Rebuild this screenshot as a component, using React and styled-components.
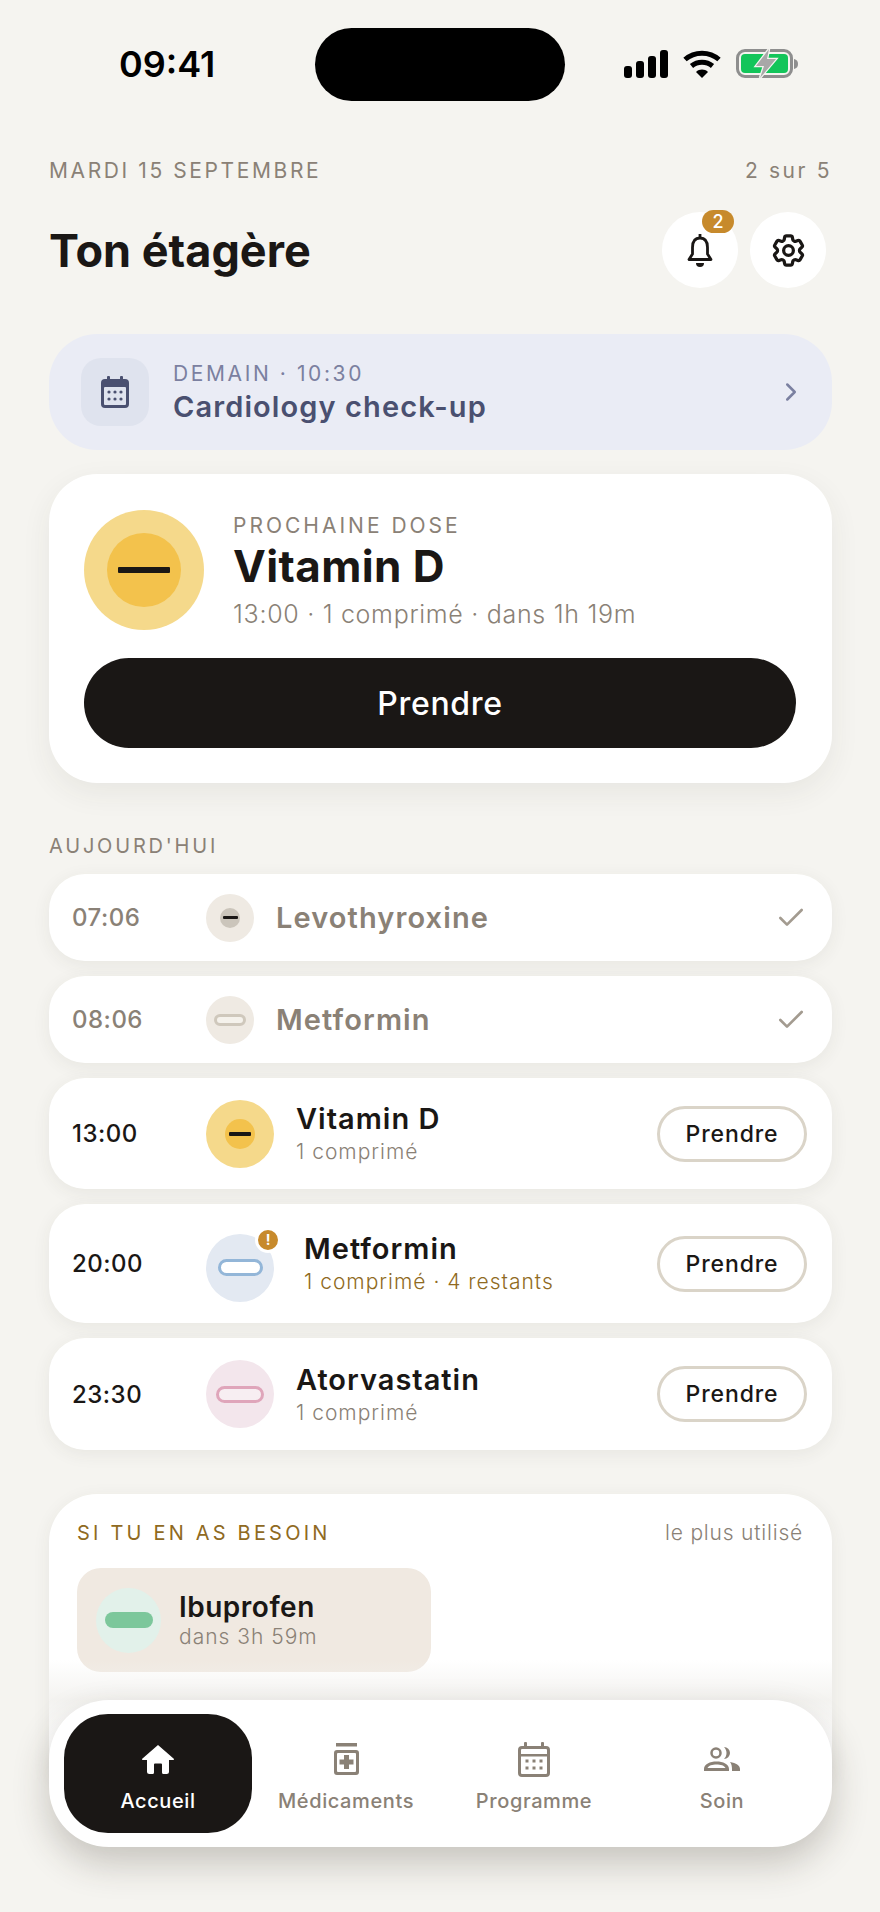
import styled, { createGlobalStyle } from "styled-components";
import { ChevronRight, Check } from "lucide-react";
import { HiOutlineCog6Tooth } from "react-icons/hi2";

const GlobalStyle = createGlobalStyle`
    html, body {
        margin: 0;
        padding: 0;
        background: #f5f4f0;
        font-family: "Inter", "Liberation Sans", sans-serif;
    }
    * { box-sizing: border-box; }
`;

const Phone = styled.div`
    position: relative;
    width: 880px;
    height: 1912px;
    overflow: hidden;
    background: #f5f4f0;
    color: #1a1715;
`;

const StatusBar = styled.div`
    display: flex;
    align-items: center;
    height: 73px;
    margin-top: 28px;
    padding-left: 119px;
`;

const Clock = styled.span`
    font-size: 36px;
    font-weight: 600;
    color: #000;
    width: 196px;
    margin-top: -1px;
`;

const Island = styled.div`
    width: 250px;
    height: 73px;
    border-radius: 37px;
    background: #000;
`;

const StatusIcons = styled.div`
    display: flex;
    align-items: center;
    gap: 15px;
    margin-left: 59px;
    margin-top: -1px;
`;

const Content = styled.main`
    padding: 56px 48px 0 49px;
`;

const DateRow = styled.div`
    display: flex;
    justify-content: space-between;
    align-items: center;
    height: 26px;
    font-size: 21px;
    letter-spacing: 2.6px;
    color: #8a8176;
`;

const TitleRow = styled.div`
    display: flex;
    justify-content: space-between;
    align-items: center;
    margin-top: 29px;
    padding-right: 6px;
`;

const Title = styled.h1`
    margin: 0;
    font-size: 45px;
    font-weight: 700;
    color: #1a1715;
`;

const HeadActions = styled.div`
    display: flex;
    gap: 12px;
`;

const RoundButton = styled.div`
    position: relative;
    width: 76px;
    height: 76px;
    border-radius: 50%;
    background: #fff;
    display: flex;
    align-items: center;
    justify-content: center;
`;

const CountBadge = styled.span`
    position: absolute;
    top: -2px;
    left: 40px;
    width: 32px;
    height: 23px;
    border-radius: 12px;
    background: #c78a2c;
    color: #fff;
    font-size: 18px;
    font-weight: 500;
    display: flex;
    align-items: center;
    justify-content: center;
`;

const Banner = styled.div`
    display: flex;
    align-items: center;
    height: 116px;
    margin-top: 46px;
    padding: 0 26px 0 32px;
    border-radius: 48px;
    background: #eaecf5;
`;

const BannerIcon = styled.div`
    width: 68px;
    height: 68px;
    border-radius: 20px;
    background: #dfe3ee;
    display: flex;
    align-items: center;
    justify-content: center;
`;

const BannerText = styled.div`
    flex: 1;
    margin-left: 24px;
    padding-top: 2px;
`;

const BannerLabel = styled.div`
    font-size: 21px;
    letter-spacing: 2.6px;
    color: #7b80a0;
    line-height: 26px;
`;

const BannerTitle = styled.div`
    margin-top: 2px;
    font-size: 29px;
    font-weight: 570;
    letter-spacing: 1.1px;
    color: #4a5070;
    line-height: 36px;
`;

const NextCard = styled.section`
    margin-top: 24px;
    height: 309px;
    padding: 36px 36px 0 35px;
    border-radius: 48px;
    background: #fff;
    box-shadow: 0 10px 30px rgba(60, 50, 40, 0.07);
`;

const NextTop = styled.div`
    display: flex;
    align-items: center;
    gap: 29px;
`;

const NextInfo = styled.div`
    display: flex;
    flex-direction: column;
`;

const NextLabel = styled.div`
    font-size: 21px;
    letter-spacing: 3px;
    color: #8a8176;
    line-height: 26px;
    margin-top: 2px;
`;

const NextName = styled.div`
    font-size: 44px;
    font-weight: 700;
    letter-spacing: 0.4px;
    line-height: 54px;
    color: #1a1715;
`;

const NextMeta = styled.div`
    font-size: 25px;
    font-weight: 300;
    letter-spacing: 0.7px;
    color: #8a8176;
    line-height: 32px;
    margin-top: 5px;
`;

const PrimaryButton = styled.div`
    margin-top: 28px;
    height: 90px;
    border-radius: 45px;
    background: #1a1715;
    color: #fff;
    font-size: 32px;
    font-weight: 550;
    letter-spacing: 0.7px;
    display: flex;
    align-items: center;
    justify-content: center;
`;

const SectionLabel = styled.div`
    margin-top: 50px;
    font-size: 20px;
    letter-spacing: 2.8px;
    color: #8a8176;
    line-height: 26px;
`;

const Rows = styled.div`
    margin-top: 15px;
    display: flex;
    flex-direction: column;
    gap: 15px;
`;

const Row = styled.div`
    display: flex;
    align-items: center;
    height: ${(p) => p.$height}px;
    padding: 0 25px 0 23px;
    border-radius: 36px;
    background: #fff;
    box-shadow: 0 4px 18px rgba(60, 50, 40, 0.07);
`;

const Time = styled.span`
    width: 134px;
    font-size: 24px;
    font-weight: 500;
    letter-spacing: 0.5px;
    color: ${(p) => (p.$done ? "#8a8176" : "#1a1715")};
`;

const PillDisc = styled.div`
    position: relative;
    flex: none;
    width: ${(p) => p.$size}px;
    height: ${(p) => p.$size}px;
    margin-top: ${(p) => p.$drop || 0}px;
    border-radius: 50%;
    background: ${(p) => p.$bg};
    display: flex;
    align-items: center;
    justify-content: center;
`;

const RoundPill = styled.div`
    width: ${(p) => p.$size}px;
    height: ${(p) => p.$size}px;
    border-radius: 50%;
    background: ${(p) => p.$bg};
    display: flex;
    align-items: center;
    justify-content: center;
`;

const Score = styled.div`
    width: ${(p) => p.$size}px;
    height: ${(p) => p.$thick}px;
    background: #1a1715;
    border-radius: 1px;
`;

const Capsule = styled.div`
    width: ${(p) => p.$width}px;
    height: ${(p) => p.$height}px;
    border-radius: ${(p) => p.$height / 2}px;
    border: 3.5px solid ${(p) => p.$border};
    background: ${(p) => p.$fill};
`;

const SolidCapsule = styled.div`
    width: 48px;
    height: 16px;
    border-radius: 8px;
    background: #7cc79b;
`;

const WarnDot = styled.span`
    position: absolute;
    top: -7px;
    right: -7px;
    width: 26px;
    height: 26px;
    border-radius: 50%;
    border: 3px solid #fff;
    background: #c78a2c;
    color: #fff;
    font-size: 14px;
    font-weight: 700;
    display: flex;
    align-items: center;
    justify-content: center;
`;

const DoneName = styled.span`
    flex: 1;
    margin-left: 22px;
    font-size: 29px;
    font-weight: 600;
    letter-spacing: 1.1px;
    color: #8a8176;
`;

const MedText = styled.div`
    flex: 1;
    margin-left: ${(p) => p.$gap}px;
    display: flex;
    flex-direction: column;
    gap: ${(p) => (p.$tight ? 0 : 3)}px;
`;

const MedName = styled.span`
    font-size: 29px;
    font-weight: 600;
    letter-spacing: 1px;
    line-height: 34px;
    color: #1a1715;
`;

const TileName = styled(MedName)`
    font-size: 28px;
    letter-spacing: 0.5px;
`;

const MedSub = styled.span`
    font-size: 21px;
    font-weight: 300;
    letter-spacing: 1px;
    line-height: 26px;
    color: ${(p) => (p.$warn ? "#8f6a22" : "#8a8176")};
`;

const TakeButton = styled.div`
    width: 150px;
    height: 56px;
    border-radius: 28px;
    border: 3px solid #dad4c8;
    background: #fff;
    font-size: 23px;
    font-weight: 550;
    letter-spacing: 0.9px;
    color: #1a1715;
    display: flex;
    align-items: center;
    justify-content: center;
`;

const NeedCard = styled.section`
    margin-top: 44px;
    height: 282px;
    padding: 25px 29px 0 28px;
    border-radius: 48px 48px 0 0;
    background: #fff;
    box-shadow: 0 4px 18px rgba(60, 50, 40, 0.07);
`;

const NeedHead = styled.div`
    display: flex;
    justify-content: space-between;
    align-items: center;
    line-height: 28px;
`;

const NeedLabel = styled.span`
    font-size: 20px;
    letter-spacing: 3.2px;
    color: #8f6a22;
`;

const NeedHint = styled.span`
    font-size: 21px;
    font-weight: 300;
    letter-spacing: 0.8px;
    color: #8a8176;
`;

const NeedTile = styled.div`
    display: flex;
    align-items: center;
    gap: 18px;
    width: 354px;
    height: 104px;
    margin-top: 21px;
    padding: 0 19px;
    border-radius: 24px;
    background: #f0e9e1;
`;

/* soft veil over the card, it tapers out again behind the nav corners */
const BottomFade = styled.div`
    position: absolute;
    left: 49px;
    width: 783px;
    top: 1660px;
    height: 80px;
    background: linear-gradient(
        to bottom,
        rgba(243, 242, 239, 0),
        rgba(243, 242, 239, 0.9) 50%,
        rgba(243, 242, 239, 0)
    );
    pointer-events: none;
`;

const Nav = styled.nav`
    position: absolute;
    left: 49px;
    top: 1700px;
    width: 783px;
    height: 147px;
    padding: 14px 15px;
    display: grid;
    grid-template-columns: repeat(4, 188px);
    border-radius: 60px;
    background: #fff;
    box-shadow: 0 16px 36px rgba(50, 40, 30, 0.24);
`;

const NavItem = styled.div`
    height: 119px;
    padding-top: 27px;
    border-radius: 44px;
    background: ${(p) => (p.$active ? "#1a1715" : "transparent")};
    color: ${(p) => (p.$active ? "#fff" : "#8a8176")};
    display: flex;
    flex-direction: column;
    align-items: center;
`;

const NavGlyph = styled.div`
    height: 36px;
    display: flex;
    align-items: center;
    justify-content: center;
`;

const NavText = styled.span`
    margin-top: 11px;
    font-size: 20px;
    font-weight: 450;
    line-height: 26px;
    letter-spacing: 0.6px;
`;

const SignalIcon = () => (
    <svg width="44" height="28" viewBox="0 0 44 28" fill="#000">
        <rect x="0" y="16" width="8" height="12" rx="3" />
        <rect x="12" y="11" width="8" height="17" rx="3" />
        <rect x="24" y="6" width="8" height="22" rx="3" />
        <rect x="36" y="0" width="8" height="28" rx="3" />
    </svg>
);

const WifiIcon = () => (
    <svg width="38" height="28" viewBox="0 0 38 28" fill="none" stroke="#000" strokeWidth="5">
        <path d="M2 9.5C11.5 1 26.5 1 36 9.5" />
        <path d="M8.5 16C14.5 11 23.5 11 29.5 16" />
        <path d="M13 22 L19 28 L25 22 C21.5 18.8 16.5 18.8 13 22Z" fill="#000" stroke="none" />
    </svg>
);

const BatteryIcon = () => (
    <svg width="62" height="30" viewBox="0 0 62 30">
        <rect x="1.5" y="1.5" width="54" height="26" rx="7.5" fill="none" stroke="#8e8e8e" strokeWidth="3" />
        <rect x="5" y="5" width="47" height="19" rx="4" fill="#13c55a" />
        <path d="M58 10c3 .5 4 2.5 4 5s-1 4.500-4 5z" fill="#8e8e8e" />
        <path
            d="M33 0 L20 17 H28 L24 29 L40 10 H31 Z"
            fill="#a8a8a8"
            stroke="#f5f4f0"
            strokeWidth="2.5"
            paintOrder="stroke"
        />
    </svg>
);

const BellIcon = () => (
    <svg width="26" height="33" viewBox="0 0 26 33" fill="none" stroke="#1a1715" strokeWidth="2.8">
        <path d="M13 0v4" />
        <path d="M13 4C7.500 4 5.500 8.500 5.500 13.500V20L2 25.500H24L20.500 20V13.500C20.500 8.500 18.500 4 13 4Z" strokeLinejoin="round" />
        <path d="M9 29h8a4 4 0 0 1-8 0z" fill="#1a1715" stroke="none" />
    </svg>
);

const CalendarSmall = () => (
    <svg width="28" height="32" viewBox="0 0 28 32" fill="#4a5070">
        <rect x="6" y="0" width="3" height="6" rx="1" />
        <rect x="19" y="0" width="3" height="6" rx="1" />
        <path d="M4 3h20a4 4 0 0 1 4 4v21a4 4 0 0 1-4 4H4a4 4 0 0 1-4-4V7a4 4 0 0 1 4-4z" />
        <rect x="3" y="11" width="22" height="18" rx="1" fill="#dfe3ee" />
        {[8, 14, 20].map((x) =>
            [16, 23].map((y) => <circle key={x + "-" + y} cx={x} cy={y} r="1.6" />)
        )}
    </svg>
);

const HomeIcon = () => (
    <svg width="32" height="29" viewBox="0 0 32 29" fill="#fff">
        <path d="M16 0 L31.500 13.500 a.8.8 0 0 1 -.5 1.500 H27 V26.500 a2.500 2.500 0 0 1 -2.500 2.500 H21.500 a1.500 1.500 0 0 1 -1.500 -1.500 V19.500 a1 1 0 0 0 -1 -1 H13 a1 1 0 0 0 -1 1 V27.500 a1.500 1.500 0 0 1 -1.500 1.500 H7.500 a2.500 2.500 0 0 1 -2.500 -2.500 V15 H1 a.8.8 0 0 1 -.5 -1.500 Z" />
    </svg>
);

const MedIcon = () => (
    <svg width="25" height="32" viewBox="0 0 25 32" fill="#8a8176">
        <rect x="2" y="0" width="21" height="3.500" />
        <path fillRule="evenodd" d="M3 7h19a3 3 0 0 1 3 3v19a3 3 0 0 1-3 3H3a3 3 0 0 1-3-3V10a3 3 0 0 1 3-3zM4 10a1 1 0 0 0-1 1v17a1 1 0 0 0 1 1h17a1 1 0 0 0 1-1V11a1 1 0 0 0-1-1z" />
        <path d="M10 12h5v4.500h4.500v5H15V26h-5v-4.500H5.500v-5H10z" />
    </svg>
);

const CalendarIcon = () => (
    <svg width="32" height="35" viewBox="0 0 32 35" fill="#8a8176">
        <rect x="6" y="0" width="3" height="6" rx="1" />
        <rect x="23" y="0" width="3" height="6" rx="1" />
        <path fillRule="evenodd" d="M4 4h24a4 4 0 0 1 4 4v23a4 4 0 0 1-4 4H4a4 4 0 0 1-4-4V8a4 4 0 0 1 4-4zM4 7a1 1 0 0 0-1 1v23a1 1 0 0 0 1 1h24a1 1 0 0 0 1-1V8a1 1 0 0 0-1-1z" />
        <rect x="2" y="12" width="28" height="2.500" />
        {[9, 16, 23].map((x) =>
            [19, 26].map((y) => <rect key={x + "-" + y} x={x - 1.5} y={y - 1.5} width="3" height="3" />)
        )}
    </svg>
);

const CareIcon = () => (
    <svg width="36" height="24" viewBox="0 0 36 24" fill="#8a8176">
        <circle cx="12" cy="6" r="4.500" fill="none" stroke="#8a8176" strokeWidth="2.500" />
        <path d="M20 0a6 6 0 0 1 0 12c1.500-1.500 2.500-3.500 2.500-6S21.500 1.500 20 0z" />
        <path fillRule="evenodd" d="M0 24v-2C0 17 6 14.500 12.500 14.500S25 17 25 22v2zM3.500 21h18c-1-2.500-5-3.500-9-3.500s-8 1-9 3.500z" />
        <path d="M26 15c6 1 10 3.500 10 7v2h-8v-2c0-2.500-.5-5-2-7z" />
    </svg>
);

const meds = [
    { time: "13:00", name: "Vitamin D", sub: "1 comprimé", height: 111, pill: "round" },
    { time: "20:00", name: "Metformin", sub: "1 comprimé · 4 restants", height: 119, pill: "blue", warn: true },
    { time: "23:30", name: "Atorvastatin", sub: "1 comprimé", height: 112, pill: "pink" },
];

const discColors = { round: "#f5d98b", blue: "#e3e9f2", pink: "#f3e6ec" };

const navItems = [
    { label: "Accueil", icon: <HomeIcon />, active: true },
    { label: "Médicaments", icon: <MedIcon /> },
    { label: "Programme", icon: <CalendarIcon /> },
    { label: "Soin", icon: <CareIcon /> },
];

const App = () => {
    return (
        <Phone>
            <GlobalStyle />
            <StatusBar>
                <Clock>09:41</Clock>
                <Island />
                <StatusIcons>
                    <SignalIcon />
                    <WifiIcon />
                    <BatteryIcon />
                </StatusIcons>
            </StatusBar>
            <Content>
                <DateRow>
                    <span>MARDI 15 SEPTEMBRE</span>
                    <span>2 sur 5</span>
                </DateRow>
                <TitleRow>
                    <Title>Ton étagère</Title>
                    <HeadActions>
                        <RoundButton>
                            <BellIcon />
                            <CountBadge>2</CountBadge>
                        </RoundButton>
                        <RoundButton>
                            <HiOutlineCog6Tooth size={39} strokeWidth={2} color="#1a1715" />
                        </RoundButton>
                    </HeadActions>
                </TitleRow>
                <Banner>
                    <BannerIcon>
                        <CalendarSmall />
                    </BannerIcon>
                    <BannerText>
                        <BannerLabel>DEMAIN · 10:30</BannerLabel>
                        <BannerTitle>Cardiology check-up</BannerTitle>
                    </BannerText>
                    <ChevronRight size={30} strokeWidth={2} color="#7b80a0" />
                </Banner>
                <NextCard>
                    <NextTop>
                        <PillDisc $size={120} $bg="#f5d98b">
                            <RoundPill $size={74} $bg="#f3c24c">
                                <Score $size={52} $thick={6} />
                            </RoundPill>
                        </PillDisc>
                        <NextInfo>
                            <NextLabel>PROCHAINE DOSE</NextLabel>
                            <NextName>Vitamin D</NextName>
                            <NextMeta>13:00 · 1 comprimé · dans 1h 19m</NextMeta>
                        </NextInfo>
                    </NextTop>
                    <PrimaryButton>Prendre</PrimaryButton>
                </NextCard>
                <SectionLabel>AUJOURD'HUI</SectionLabel>
                <Rows>
                    <Row $height={87}>
                        <Time $done>07:06</Time>
                        <PillDisc $size={48} $bg="#efeae3">
                            <RoundPill $size={20} $bg="#cbc5bb">
                                <Score $size={15} $thick={3.5} />
                            </RoundPill>
                        </PillDisc>
                        <DoneName>Levothyroxine</DoneName>
                        <Check size={32} strokeWidth={2} color="#a39b90" />
                    </Row>
                    <Row $height={87}>
                        <Time $done>08:06</Time>
                        <PillDisc $size={48} $bg="#efeae3">
                            <Capsule $width={32} $height={12} $border="#cfc8bc" $fill="#f5f2ec" />
                        </PillDisc>
                        <DoneName>Metformin</DoneName>
                        <Check size={32} strokeWidth={2} color="#a39b90" />
                    </Row>
                    {meds.map((med) => (
                        <Row key={med.time} $height={med.height}>
                            <Time>{med.time}</Time>
                            <PillDisc $size={68} $bg={discColors[med.pill]} $drop={med.warn ? 8 : 0}>
                                {med.pill === "round" && (
                                    <RoundPill $size={30} $bg="#f3c24c">
                                        <Score $size={22} $thick={4} />
                                    </RoundPill>
                                )}
                                {med.pill === "blue" && (
                                    <Capsule $width={45} $height={17} $border="#93b6d8" $fill="#fff" />
                                )}
                                {med.pill === "pink" && (
                                    <Capsule $width={48} $height={17} $border="#dfa5ba" $fill="#f7eef2" />
                                )}
                                {med.warn && <WarnDot>!</WarnDot>}
                            </PillDisc>
                            <MedText $gap={med.warn ? 30 : 22}>
                                <MedName>{med.name}</MedName>
                                <MedSub $warn={med.warn}>{med.sub}</MedSub>
                            </MedText>
                            <TakeButton>Prendre</TakeButton>
                        </Row>
                    ))}
                </Rows>
                <NeedCard>
                    <NeedHead>
                        <NeedLabel>SI TU EN AS BESOIN</NeedLabel>
                        <NeedHint>le plus utilisé</NeedHint>
                    </NeedHead>
                    <NeedTile>
                        <PillDisc $size={65} $bg="#e2f1ea">
                            <SolidCapsule />
                        </PillDisc>
                        <MedText $gap={0} $tight>
                            <TileName>Ibuprofen</TileName>
                            <MedSub>dans 3h 59m</MedSub>
                        </MedText>
                    </NeedTile>
                </NeedCard>
            </Content>
            <BottomFade />
            <Nav>
                {navItems.map((item) => (
                    <NavItem key={item.label} $active={item.active}>
                        <NavGlyph>{item.icon}</NavGlyph>
                        <NavText>{item.label}</NavText>
                    </NavItem>
                ))}
            </Nav>
        </Phone>
    );
};

export default App;
